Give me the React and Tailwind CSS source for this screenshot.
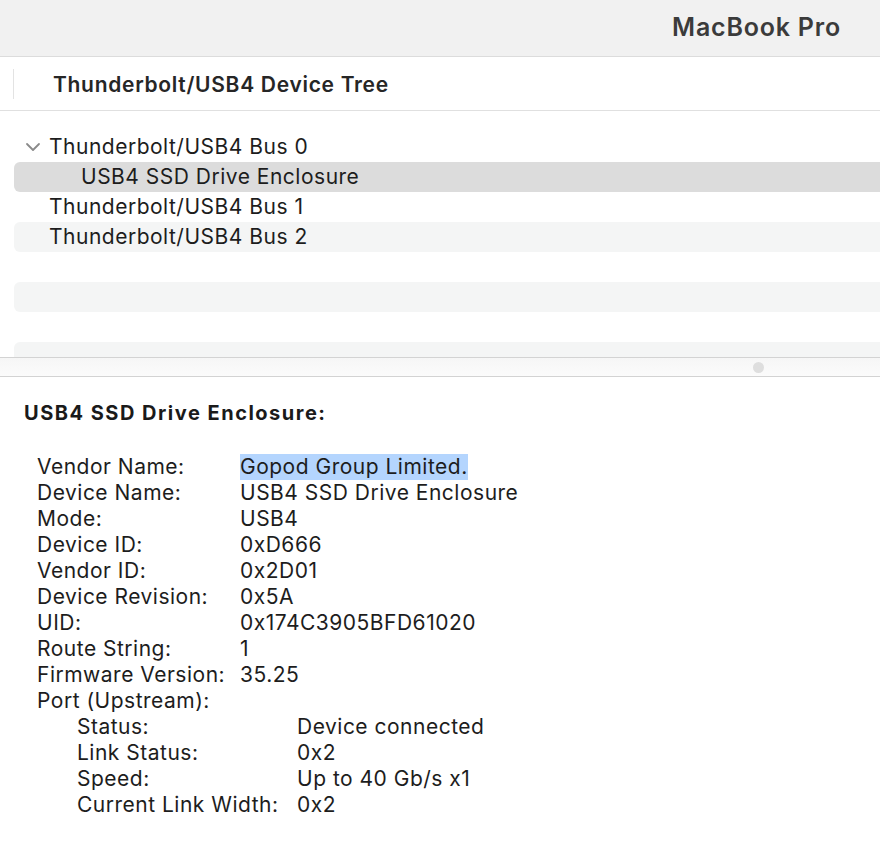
import React from "react";

const font = { fontFamily: "Inter, 'Noto Sans', sans-serif" };

function Chevron() {
  return (
    <svg width="16" height="10" viewBox="0 0 16 10" className="text-[#8a8a8a]">
      <path d="M2 2 L8 8 L14 2" fill="none" stroke="currentColor" strokeWidth="1.8" strokeLinecap="round" strokeLinejoin="round" />
    </svg>
  );
}

const details = [
  ["Vendor Name:", "Gopod Group Limited.", true],
  ["Device Name:", "USB4 SSD Drive Enclosure"],
  ["Mode:", "USB4"],
  ["Device ID:", "0xD666"],
  ["Vendor ID:", "0x2D01"],
  ["Device Revision:", "0x5A"],
  ["UID:", "0x174C3905BFD61020"],
  ["Route String:", "1"],
  ["Firmware Version:", "35.25"],
];

const port = [
  ["Status:", "Device connected"],
  ["Link Status:", "0x2"],
  ["Speed:", "Up to 40 Gb/s x1"],
  ["Current Link Width:", "0x2"],
];

export default function App() {
  return (
    <div className="w-[880px] h-[868px] bg-white text-[#1d1d1d] overflow-hidden" style={font}>
      <div className="h-[57px] bg-[#f1f1f1] border-b border-[#dcdcdc] flex items-center justify-end pr-[39px]">
        <span className="text-[25px] font-semibold text-[#3b3b3b] tracking-[0.8px]">MacBook Pro</span>
      </div>
      <div className="h-[54px] border-b border-[#e0e0e0] flex items-center">
        <div className="ml-[13px] w-px h-[30px] bg-[#e3e3e3]" />
        <span className="ml-[39px] mt-[2px] text-[21px] font-semibold text-[#262626] tracking-[0.7px]">Thunderbolt/USB4 Device Tree</span>
      </div>
      <div className="h-[246px] pt-[21px] pl-[14px] flex flex-col overflow-hidden text-[21px] tracking-[0.5px]">
        <div className="h-[30px] shrink-0 flex items-center">
          <div className="w-[35px] flex justify-center pl-[2px]"><Chevron /></div>
          <span>Thunderbolt/USB4 Bus 0</span>
        </div>
        <div className="h-[30px] shrink-0 flex items-center bg-[#dcdcdc] rounded-l-[6px] pl-[67px]">USB4 SSD Drive Enclosure</div>
        <div className="h-[30px] shrink-0 flex items-center pl-[35px]">Thunderbolt/USB4 Bus 1</div>
        <div className="h-[30px] shrink-0 flex items-center bg-[#f4f5f5] rounded-l-[6px] pl-[35px]">Thunderbolt/USB4 Bus 2</div>
        <div className="h-[30px] shrink-0" />
        <div className="h-[30px] shrink-0 bg-[#f4f5f5] rounded-l-[6px]" />
        <div className="h-[30px] shrink-0" />
        <div className="h-[30px] shrink-0 bg-[#f4f5f5] rounded-l-[6px]" />
      </div>
      <div className="h-[20px] border-y border-[#d3d3d3] bg-gradient-to-b from-[#f6f6f6] to-[#fbfbfb] flex items-center">
        <div className="ml-[753px] w-[11px] h-[11px] rounded-full bg-[#dedede]" />
      </div>
      <div className="pl-[24px] pt-[23px]">
        <div className="text-[20px] font-bold text-[#1a1a1a] leading-[26px] tracking-[1.5px]">USB4 SSD Drive Enclosure:</div>
        <div className="mt-[28px] pl-[13px] text-[21px] leading-[26px] tracking-[0.5px]">
          {details.map(([k, v, hl]) => (
            <div key={k} className="flex">
              <span className="w-[203px] shrink-0">{k}</span>
              <span className={hl ? "bg-[#b4d5fe]" : ""}>{v}</span>
            </div>
          ))}
          <div>Port (Upstream):</div>
          <div className="pl-[40px]">
            {port.map(([k, v]) => (
              <div key={k} className="flex">
                <span className="w-[220px] shrink-0">{k}</span>
                <span>{v}</span>
              </div>
            ))}
          </div>
        </div>
      </div>
    </div>
  );
}
